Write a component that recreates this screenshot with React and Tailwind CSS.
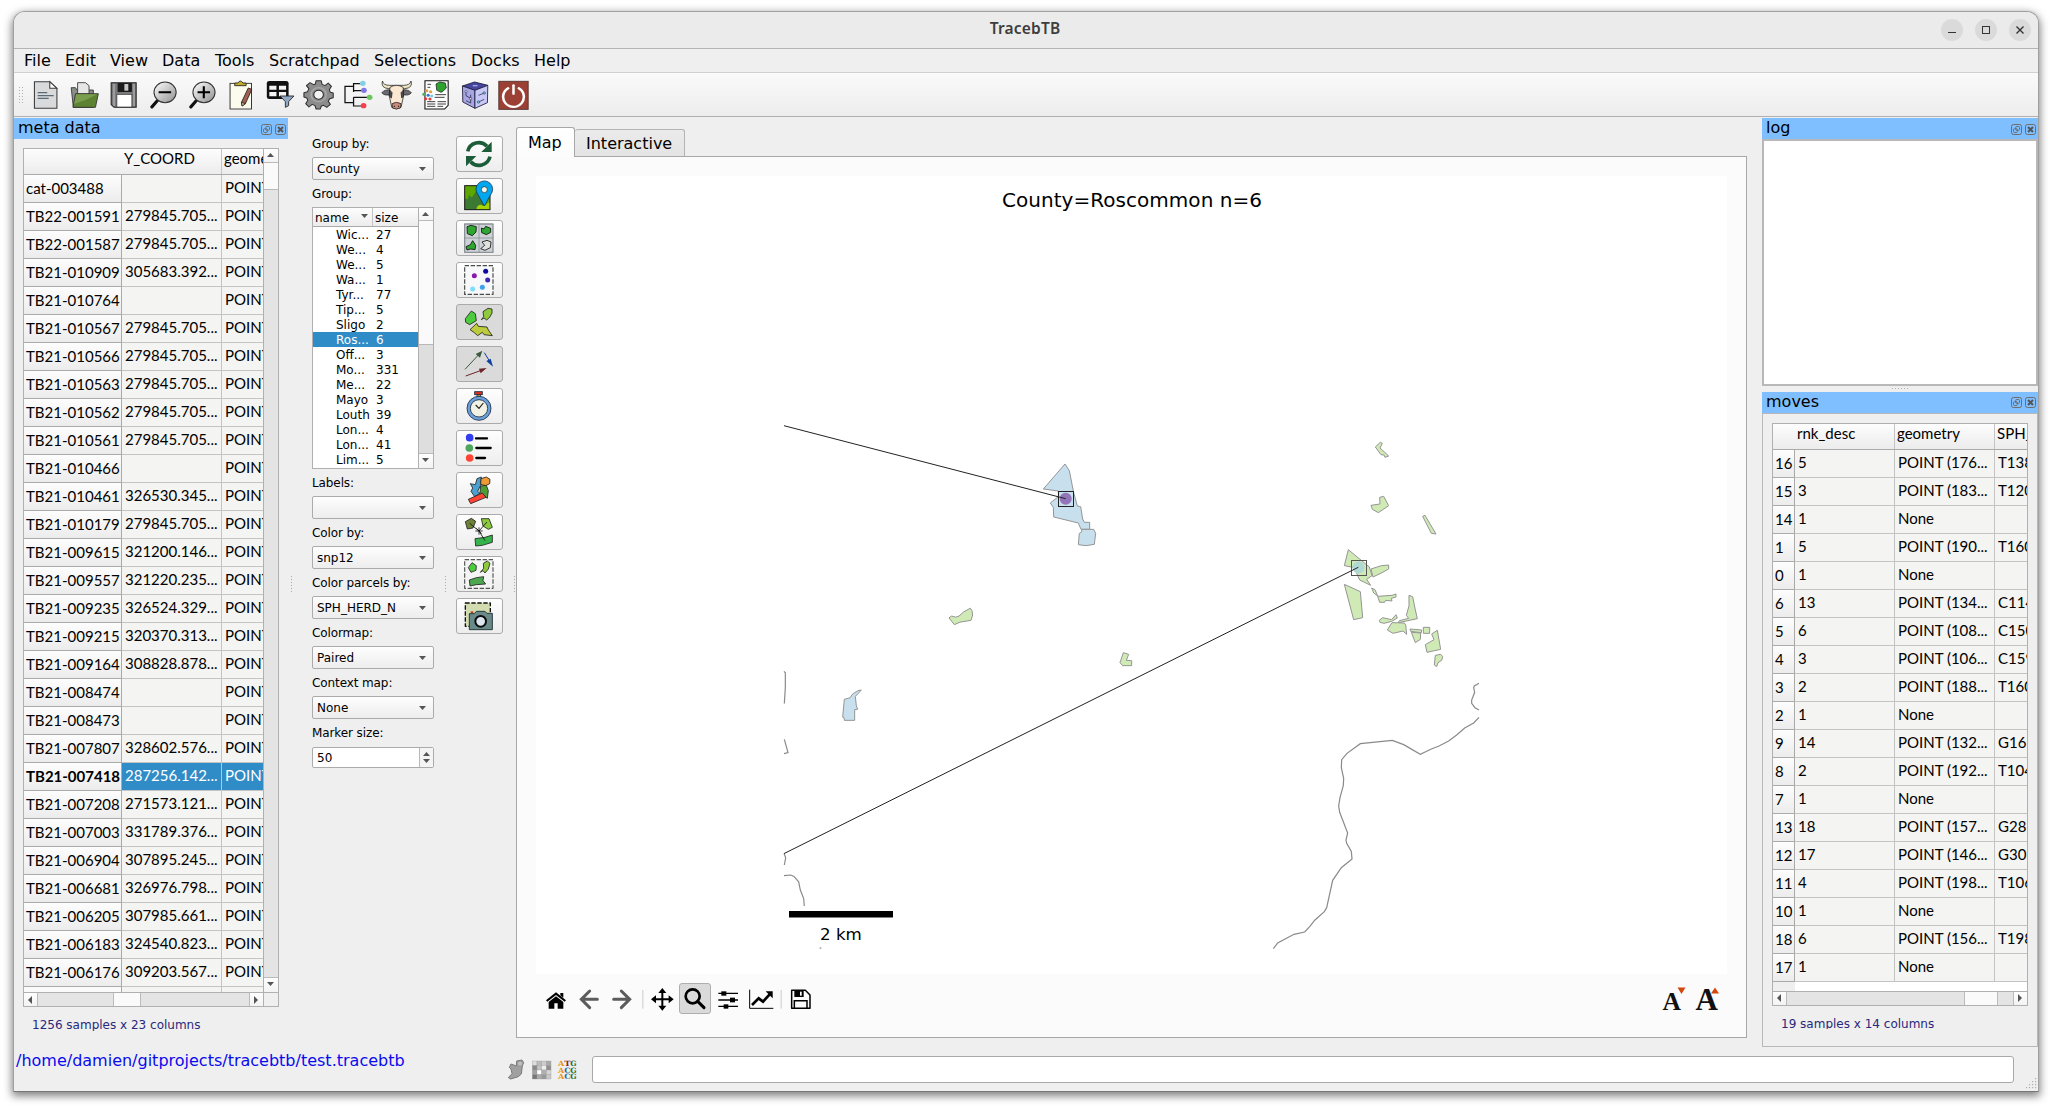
import React from "react";

const UI = "font-['DejaVu_Sans',sans-serif]";

/* ---------- shared bits ---------- */

function Tri({ dir = "down", className = "" }) {
  const pts = {
    down: "0,0 7,0 3.5,4",
    up: "0,4 7,4 3.5,0",
    left: "4,0 4,8 0,4",
    right: "0,0 0,8 4,4",
  }[dir];
  const vertical = dir === "down" || dir === "up";
  return (
    <svg
      className={className}
      width={vertical ? 7 : 4}
      height={vertical ? 4 : 8}
      viewBox={vertical ? "0 0 7 4" : "0 0 4 8"}
    >
      <polygon points={pts} fill="#555" />
    </svg>
  );
}

function DockTitle({ text }) {
  return (
    <div className="flex h-[21px] shrink-0 items-center bg-[#7fbfff] pr-[2px] pl-[4px]">
      <span className="flex-1 text-[16px] leading-[20px] -mt-[1px]">{text}</span>
      <svg className="mt-[1px]" width="25" height="11" viewBox="0 0 25 11" fill="none" stroke="#6d6d6d">
        <rect x=".5" y=".5" width="10" height="10" rx="2" />
        <rect x="4.7" y="2.5" width="3.8" height="3.8" rx="1" />
        <rect x="2.5" y="4.7" width="3.8" height="3.8" rx="1" />
        <rect x="14.5" y=".5" width="10" height="10" rx="2" />
        <path d="M17 3l5 5M22 3l-5 5" strokeWidth="2" stroke="#555" />
      </svg>
    </div>
  );
}

const BTN = "flex items-center justify-center bg-gradient-to-b from-[#fefefe] to-[#f3f3f3]";

function DotsV({ className }) {
  return (
    <svg className={className} width="1" height="17" viewBox="0 0 1 17">
      <path d="M.5 0V17" stroke="#a8a8a8" strokeDasharray="1 2" />
    </svg>
  );
}

/* ---------- toolbar icons ---------- */

const glass = (
  <>
    <defs>
      <linearGradient id="lens" x1="0" y1="0" x2="1" y2="1">
        <stop offset="0" stopColor="#fff" />
        <stop offset="1" stopColor="#8f8f8f" />
      </linearGradient>
    </defs>
  </>
);

const toolbarIcons = [
  /* new document */
  <g key="doc" stroke="#3c3c3c" strokeWidth="3">
    <path d="M97 245H140L160 265V325H97Z" fill="#d9dadb" />
    <path d="M140 245V265H160Z" fill="#fff" />
    <path d="M106 278H133M106 287H151M106 295H137" stroke="#5a6a76" strokeWidth="3.5" />
  </g>,
  /* open folder */
  <g key="folder" stroke="#333" strokeWidth="2.5">
    <path d="M200 263H212L216 270H262V322H206Z" fill="#8b8f89" />
    <path d="M218 248H240L250 257V282H218Z" fill="#e6e6e6" />
    <path d="M212 281H276L268 322H205Z" fill="#5c8232" />
    <path d="M214 283H273L240 300L208 312Z" fill="#90b060" stroke="none" opacity=".6" />
  </g>,
  /* floppy */
  <g key="save">
    <path d="M312 248H382V322H320L312 314Z" fill="#7a7a7e" stroke="#222" strokeWidth="3" />
    <rect x="330" y="249" width="40" height="27" fill="#1c1c1c" />
    <rect x="349" y="252" width="11" height="20" fill="#c8c8c8" />
    <rect x="328" y="283" width="42" height="38" fill="#fff" stroke="#333" strokeWidth="2" />
    <path d="M320 252V318M376 252V318" stroke="#bbb" strokeWidth="3" />
  </g>,
  /* zoom out */
  <g key="zo">
    {glass}
    <path d="M442 301L426 321" stroke="#111" strokeWidth="9" strokeLinecap="round" />
    <circle cx="463" cy="277" r="31" fill="url(#lens)" stroke="#333" strokeWidth="3" />
    <path d="M445 277H480" stroke="#000" strokeWidth="6" />
  </g>,
  /* zoom in */
  <g key="zi">
    <path d="M551 301L535 321" stroke="#111" strokeWidth="9" strokeLinecap="round" />
    <circle cx="572" cy="277" r="31" fill="url(#lens)" stroke="#333" strokeWidth="3" />
    <path d="M554 277H589M571.500 259V295" stroke="#000" strokeWidth="6" />
  </g>,
  /* clipboard */
  <g key="clip" stroke="#222" strokeWidth="2.500">
    <rect x="645" y="250" width="60" height="77" fill="#fbfbee" />
    <path d="M658 257V249H667Q674 237 681 249H690V257Z" fill="#bfae2c" />
    <path d="M696 264L706 268L688 311L679 318L677 307Z" fill="#a4604e" />
    <path d="M677 307L679 318L688 311Z" fill="#eed9a8" />
  </g>,
  /* table with filter */
  <g key="filter">
    <rect x="748" y="243" width="61" height="54" rx="7" fill="#111" />
    <path d="M755 257H775V269H755ZM782 257H802V269H782ZM755 276H775V289H755ZM782 276H802V289H782Z" fill="#f4f4f4" />
    <path d="M785 288H824L809 305V317L800 322V305Z" fill="#8fa8c4" stroke="#222" strokeWidth="2.500" />
  </g>,
  /* gear */
  <g key="gear" stroke="#2e2e2e" strokeWidth="3" strokeLinejoin="round">
    <path
      d="M886 242H900L903 253L911 257L920 249L929 259L923 269L926 277L934 279V293L924 296L920 304L926 313L916 322L907 316L900 319L898 327H886L883 317L875 313L866 321L857 311L863 301L860 294L852 291V278L862 275L866 266L859 257L869 248L879 254L884 252Z"
      fill="#8c8c8c"
    />
    <circle cx="893" cy="284" r="21" fill="none" stroke="#a9a9a9" strokeWidth="4" />
    <circle cx="893" cy="284" r="13.500" fill="#f2f2f2" />
  </g>,
  /* tree */
  <g key="tree">
    <path d="M1012 251H991V276M1012 272H991M967 310V259H991M967 308H991M991 292V318H1014M991 292H1034" fill="none" stroke="#111" strokeWidth="3.500" />
    <circle cx="1017" cy="250" r="8" fill="#84cfe4" />
    <circle cx="1020" cy="271" r="8" fill="#7d78e6" />
    <circle cx="1036" cy="292" r="8" fill="#6cc65a" />
    <circle cx="1019" cy="317" r="8" fill="#f8404c" />
  </g>,
  /* cow */
  <g key="cow" stroke="#222" strokeWidth="2.200" strokeLinejoin="round">
    <path d="M1072 243Q1074 256 1092 256H1131Q1149 256 1152 243Q1158 264 1134 266H1090Q1066 264 1072 243Z" fill="#efe6c4" />
    <path d="M1070 278Q1080 267 1096 270L1093 284Q1077 288 1070 278ZM1153 278Q1143 267 1127 270L1130 284Q1146 288 1153 278Z" fill="#6a6a70" />
    <path d="M1093 262Q1111 250 1130 262L1131 288L1124 322Q1111 331 1098 322L1091 288Z" fill="#fbe8d2" />
    <path d="M1092 270L1099 278L1097 294L1091 288ZM1131 270L1124 278L1126 294L1131 288Z" fill="#4c4c50" />
    <path d="M1099 311Q1111 303 1124 311L1122 324Q1111 330 1100 324Z" fill="#c88a7a" />
    <path d="M1105 317V321M1117 317V321" strokeWidth="3" />
  </g>,
  /* report */
  <g key="report">
    <path d="M1191 242H1256V316L1246 327H1191Z" fill="#fff" stroke="#111" strokeWidth="3" />
    <path d="M1222 252L1232 246L1248 249L1251 264L1240 275L1236 277L1224 271Z" fill="#2ea22e" stroke="#111" strokeWidth="2" />
    <path d="M1198 253H1208M1198 262H1206M1220 284H1250M1218 292H1246M1197 305H1220M1226 305H1250M1197 312H1220M1226 312H1250M1197 319H1220M1226 319H1242" stroke="#222" strokeWidth="2.500" />
    <circle cx="1196" cy="272" r="4.500" fill="#e8a03c" />
    <circle cx="1207" cy="275" r="4.500" fill="#e8a03c" />
    <circle cx="1188" cy="283" r="4.500" fill="#4cae60" />
    <circle cx="1200" cy="286" r="4.500" fill="#3a76d2" />
    <circle cx="1210" cy="288" r="4.500" fill="#78ccf0" />
    <circle cx="1193" cy="296" r="4.500" fill="#e04040" />
    <circle cx="1205" cy="297" r="4.500" fill="#e04040" />
  </g>,
  /* cube */
  <g key="cube" stroke="#1c1c3c" strokeWidth="2.500" strokeLinejoin="round">
    <path d="M1296 258L1330 246L1367 256L1331 271Z" fill="#4646a0" />
    <path d="M1296 258L1331 271V325L1297 306Z" fill="#a6a6e2" />
    <path d="M1367 256L1331 271V325L1366 308Z" fill="#c8c8f6" />
    <path d="M1306 276V287L1319 295M1306 302L1319 309V284M1341 286L1357 279M1341 306L1357 298" fill="none" strokeWidth="2" />
    <path d="M1325 257H1338" stroke="#c8c8f6" strokeWidth="3" />
    <g strokeWidth="1.500">
      <circle cx="1306" cy="275" r="3" fill="#fff" />
      <circle cx="1319" cy="296" r="3" fill="#fff" />
      <circle cx="1357" cy="279" r="3.500" fill="#78d4e8" />
      <circle cx="1341" cy="306" r="3.500" fill="#78d4e8" />
    </g>
  </g>,
  /* power */
  <g key="power">
    <rect x="1398" y="244" width="82" height="84" fill="#9c4036" stroke="#5a3a36" strokeWidth="3" />
    <path d="M1424 265A29 30 0 1 0 1454 265" fill="none" stroke="#fff" strokeWidth="7" strokeLinecap="round" />
    <path d="M1439 256V281" stroke="#fff" strokeWidth="7" strokeLinecap="round" />
  </g>,
];

function ToolIcon({ index, children }) {
  return (
    <svg width="39" height="33" viewBox={`${73.4 + 109.25 * index} 234 109.25 99`} preserveAspectRatio="none" className="shrink-0">
      {children}
    </svg>
  );
}

/* ---------- side button icons ---------- */

const sideIcons = [
  {
    y: 49,
    art: (
      <g fill="none" stroke="#1c5c38" strokeWidth="11">
        <path d="M504 94A34 34 0 0 1 562 79" />
        <polygon points="576,65 576,96 545,96" fill="#1c5c38" stroke="none" />
        <path d="M571 110A34 34 0 0 1 513 125" />
        <polygon points="499,139 499,108 530,108" fill="#1c5c38" stroke="none" />
      </g>
    ),
  },
  {
    y: 175,
    art: (
      <g>
        <rect x="495" y="197" width="76" height="72" fill="#5ea600" />
        <path d="M496 234Q506 246 508 222Q514 238 520 228Q524 220 530 214Q540 240 556 250L550 269H496Z" fill="#3c7a34" />
        <path d="M530 268Q532 254 544 254Q556 262 564 250L571 246V269Z" fill="#a6d400" />
        <rect x="495" y="197" width="76" height="72" fill="none" stroke="#1a1a1a" strokeWidth="3" />
        <path d="M554 258L535 224A25 25 0 1 1 573 224Z" fill="#00a6ee" stroke="#124" strokeWidth="2" />
        <circle cx="554" cy="209" r="9" fill="#f0fbf0" stroke="#222" strokeWidth="2" />
      </g>
    ),
  },
  {
    y: 301,
    art: (
      <g stroke="#111" strokeWidth="2.5" strokeLinejoin="round">
        <rect x="495" y="312" width="85" height="85" fill="#ccd2d6" stroke="#8c9296" strokeWidth="4" />
        <path d="M538 312V397M495 354H580" stroke="#8c9296" />
        <path d="M502 320L514 316L530 320L529 336L518 347L503 341Z" fill="#2fa62f" />
        <path d="M545 324L553 327L558 319L573 325V337L560 344L546 338Z" fill="#2fa62f" />
        <path d="M499 380L512 374L519 362L528 376L526 389L513 387L502 390Z" fill="#2fa62f" />
        <path d="M547 366L562 361L574 366L572 383L556 391L543 386L555 376Z" fill="#dfe2dc" />
      </g>
    ),
  },
  {
    y: 427,
    art: (
      <g>
        <rect x="495" y="437" width="85" height="86" fill="#f7f8f9" stroke="#4a4a4a" strokeWidth="3.500" strokeDasharray="13 5" />
        <circle cx="524" cy="467" r="7.500" fill="#8a18a8" />
        <circle cx="558" cy="454" r="7.500" fill="#0a0aa0" />
        <circle cx="564" cy="480" r="7.500" fill="#3e28b0" />
        <circle cx="548" cy="502" r="7.500" fill="#3ca2ee" />
        <circle cx="519" cy="507" r="7.500" fill="#7edcfc" />
      </g>
    ),
  },
  {
    y: 553,
    on: true,
    art: (
      <g stroke="#222" strokeWidth="2.500" strokeLinejoin="round">
        <path d="M497 596L515 573L527 581L530 602L510 614L498 607Z" fill="#4ccc3c" />
        <path d="M545 599L552 590L550 575L565 565L577 567V579L570 592L561 600L553 594Z" fill="#90ca3c" />
        <path d="M511 629L531 610L536 619L562 621L566 630L578 647L553 644L548 637L534 647L524 638L517 633Z" fill="#bccc3c" />
      </g>
    ),
  },
  {
    y: 679,
    on: true,
    art: (
      <g strokeWidth="3">
        <path d="M496 748L540 701" stroke="#3a5a3e" />
        <polygon points="548,692 541,713 528,702" fill="#3a5a3e" />
        <path d="M498 768L545 751" stroke="#6a262a" />
        <polygon points="561,744 543,760 538,746" fill="#6a262a" />
        <path d="M554 698L570 724" stroke="#1040a0" />
        <polygon points="580,740 560,723 573,716" fill="#1040a0" />
      </g>
    ),
  },
  {
    y: 805,
    art: (
      <g stroke="#1c2c44" strokeWidth="2.500">
        <rect x="532" y="823" width="11" height="9" fill="#e8962c" />
        <rect x="525" y="815" width="23" height="9" fill="#d8301c" />
        <circle cx="538" cy="865" r="36" fill="#6ca0d8" />
        <circle cx="538" cy="865" r="26" fill="#f2f2e4" />
        <path d="M528 855L538 865L551 849" fill="none" stroke="#222" strokeWidth="3.500" />
      </g>
    ),
  },
  {
    y: 931,
    art: (
      <g>
        <circle cx="510" cy="953" r="11.500" fill="#323ef0" />
        <circle cx="509" cy="984" r="11.500" fill="#4ea65e" />
        <circle cx="510" cy="1014" r="11.500" fill="#ff4636" />
        <path d="M529 955H562M530 984H573M530 1014H556" stroke="#000" strokeWidth="7" strokeLinecap="round" />
      </g>
    ),
  },
  {
    y: 1057,
    art: (
      <g transform="translate(0 990)" stroke="#222" strokeWidth="2.500" strokeLinejoin="round">
        <path d="M512 101L527 104L532 86L545 81L543 106L534 124L541 130L525 140L514 124L519 114Z" fill="#4ca0d0" />
        <path d="M544 86L560 81L571 88L570 101L558 107L543 103Z" fill="#f09a34" />
        <path d="M543 108L560 106L566 122L563 145L550 136L541 128Z" fill="#4e9c34" />
        <path d="M506 148L548 129L559 142L513 161Z" fill="#ff4434" />
      </g>
    ),
  },
  {
    y: 1183,
    art: (
      <g transform="translate(0 990)" stroke="#222" strokeWidth="2.500" strokeLinejoin="round">
        <path d="M497 215L515 205L528 214L520 234L503 237Z" fill="#6e8238" />
        <path d="M545 206H568L578 232L566 238L550 228Z" fill="#8cca3c" />
        <path d="M526 266L556 262L578 255V277L548 286L528 288Z" fill="#34b44a" />
        <path d="M510 220L538 243L562 216M538 243L556 272M538 232V254M527 243H549M530 235L546 251" fill="none" stroke="#111" />
      </g>
    ),
  },
  {
    y: 1309,
    art: (
      <g transform="translate(0 990)" stroke="#222" strokeWidth="2.500" strokeLinejoin="round">
        <rect x="495" y="329" width="85" height="86" fill="#f4f4f4" stroke="#555" strokeWidth="3.500" strokeDasharray="13 5" />
        <path d="M506 353L517 338L530 347L529 361L514 367Z" fill="#4ccc3c" />
        <path d="M542 367L552 355L551 340L563 333L571 340L566 357L556 369L550 362Z" fill="#90ca3c" />
        <path d="M509 390L530 383L552 380L550 392L558 402L530 404L511 408Z" fill="#4ea650" />
      </g>
    ),
  },
  {
    y: 1435,
    art: (
      <g transform="translate(0 990)" strokeLinejoin="round">
        <rect x="497" y="459" width="75" height="70" fill="#d2dcb0" stroke="#111" strokeWidth="4" strokeDasharray="13 5" />
        <rect x="513" y="484" width="8" height="6" fill="#c04020" />
        <path d="M509 491H524L530 484H556L562 490H578V539H509Z" fill="#6a8a8a" stroke="#2a3a3a" strokeWidth="3" />
        <circle cx="543" cy="514" r="16" fill="#dde6ee" stroke="#0c0c0c" strokeWidth="6" />
      </g>
    ),
  },
];

function SideButton({ icon }) {
  return (
    <div
      className={
        icon.on
          ? "h-[36px] w-[47px] rounded-[3px] border border-[#aaa] bg-[#dadada]"
          : "h-[36px] w-[47px] rounded-[3px] border border-[#ababab] bg-gradient-to-b from-[#fefefe] to-[#ededed]"
      }
    >
      <svg width="45" height="34" viewBox={`472 ${icon.y + 2} 135 102`} fill="none">
        {icon.art}
      </svg>
    </div>
  );
}

/* ---------- metadata table ---------- */

const metaRows = [
  ["cat-003488", ""],
  ["TB22-001591", "279845.705..."],
  ["TB22-001587", "279845.705..."],
  ["TB21-010909", "305683.392..."],
  ["TB21-010764", ""],
  ["TB21-010567", "279845.705..."],
  ["TB21-010566", "279845.705..."],
  ["TB21-010563", "279845.705..."],
  ["TB21-010562", "279845.705..."],
  ["TB21-010561", "279845.705..."],
  ["TB21-010466", ""],
  ["TB21-010461", "326530.345..."],
  ["TB21-010179", "279845.705..."],
  ["TB21-009615", "321200.146..."],
  ["TB21-009557", "321220.235..."],
  ["TB21-009235", "326524.329..."],
  ["TB21-009215", "320370.313..."],
  ["TB21-009164", "308828.878..."],
  ["TB21-008474", ""],
  ["TB21-008473", ""],
  ["TB21-007807", "328602.576..."],
  ["TB21-007418", "287256.142..."],
  ["TB21-007208", "271573.121..."],
  ["TB21-007003", "331789.376..."],
  ["TB21-006904", "307895.245..."],
  ["TB21-006681", "326976.798..."],
  ["TB21-006205", "307985.661..."],
  ["TB21-006183", "324540.823..."],
  ["TB21-006176", "309203.567..."],
];

const TBL = "font-['Lato',sans-serif] text-[15px] whitespace-nowrap";
const ROWHEAD = "border-r border-b border-[#aaa] bg-gradient-to-b from-[#fdfdfd] to-[#ececec]";
const CELL = "border-r border-b border-[#c4c4c4]";

function MetaTable() {
  return (
    <div className="ml-[9px] mt-[9px] flex h-[859px] w-[256px] flex-col border border-[#b0b0b0] bg-white">
      <div className="flex h-[843px]">
        <div className={"w-[239px] overflow-hidden " + TBL}>
          <div className="flex h-[26px] border-b border-[#aaa] bg-gradient-to-b from-[#fdfdfd] to-[#ececec] leading-[19px]">
            <div className="w-[198px] shrink-0 border-r border-[#c4c4c4] pl-[100px]">Y_COORD</div>
            <div className="pl-[2px]">geometry</div>
          </div>
          {metaRows.map(([id, y]) => {
            const sel = id === "TB21-007418";
            return (
              <div key={id} className="flex h-[28px]">
                <div className={"w-[98px] shrink-0 overflow-hidden pl-[2px] leading-[26px] " + ROWHEAD + (sel ? " font-bold" : "")}>{id}</div>
                <div className={"w-[100px] shrink-0 pl-[3px] leading-[24px] " + CELL + (sel ? " bg-[#308cc6] text-white" : " bg-[#f4f4f2]")}>{y}</div>
                <div className={"w-[80px] shrink-0 pl-[3px] leading-[24px] " + CELL + (sel ? " bg-[#308cc6] text-white" : " bg-[#f4f4f2]")}>POINT (</div>
              </div>
            );
          })}
          <div className="flex h-[5px]">
            <div className="w-[98px] shrink-0 border-r border-[#aaa] bg-[#fafafa]" />
            <div className="w-[100px] shrink-0 border-r border-[#c4c4c4] bg-[#f4f4f2]" />
            <div className="w-[60px] shrink-0 bg-[#f4f4f2]" />
          </div>
        </div>
        <div className="flex w-[15px] flex-col border-l border-[#b0b0b0] bg-[#e4e4e4]">
          <div className={"h-[14px] border-b border-[#bbb] pr-[2px] pb-[2px] " + BTN}><Tri dir="up" /></div>
          <div className="h-[27px] border-b border-[#b8b8b8] bg-[#fafafa]" />
          <div className="flex-1" />
          <div className={"h-[15px] border-t border-[#bbb] pr-[2px] pb-[2px] " + BTN}><Tri /></div>
        </div>
      </div>
      <div className="flex h-[14px] border-t border-[#b0b0b0] bg-[#e4e4e4]">
        <div className={"w-[14px] border-r border-[#bbb] pr-[1px] " + BTN}><Tri dir="left" /></div>
        <div className="w-[75px]" />
        <div className="w-[28px] border-x border-[#bbb] bg-[#fafafa]" />
        <div className="flex-1" />
        <div className={"w-[14px] border-l border-[#bbb] pr-[2px] " + BTN}><Tri dir="right" /></div>
        <div className="w-[15px] border-l border-[#b0b0b0] bg-[#efefef]" />
      </div>
    </div>
  );
}

/* ---------- moves table ---------- */

const moveRows = [
  ["16", "5", "POINT (176...", "T138"],
  ["15", "3", "POINT (183...", "T120"],
  ["14", "1", "None", ""],
  ["1", "5", "POINT (190...", "T160"],
  ["0", "1", "None", ""],
  ["6", "13", "POINT (134...", "C114"],
  ["5", "6", "POINT (108...", "C150"],
  ["4", "3", "POINT (106...", "C159"],
  ["3", "2", "POINT (188...", "T160"],
  ["2", "1", "None", ""],
  ["9", "14", "POINT (132...", "G161"],
  ["8", "2", "POINT (192...", "T104"],
  ["7", "1", "None", ""],
  ["13", "18", "POINT (157...", "G281"],
  ["12", "17", "POINT (146...", "G301"],
  ["11", "4", "POINT (198...", "T106"],
  ["10", "1", "None", ""],
  ["18", "6", "POINT (156...", "T198"],
  ["17", "1", "None", ""],
];

function MovesTable() {
  return (
    <div className="ml-[9px] mt-[9px] flex h-[583px] w-[256px] flex-col border border-[#b0b0b0] bg-white">
      <div className={"flex-1 overflow-hidden " + TBL}>
        <div className="flex h-[26px] border-b border-[#aaa] bg-gradient-to-b from-[#fdfdfd] to-[#ececec] leading-[19px]">
          <div className="w-[122px] shrink-0 border-r border-[#c4c4c4] pl-[24px]">rnk_desc</div>
          <div className="w-[100px] shrink-0 border-r border-[#c4c4c4] pl-[2px]">geometry</div>
          <div className="pl-[2px]">SPH_HERD</div>
        </div>
        {moveRows.map(([id, d, g, h]) => (
          <div key={id} className="flex h-[28px]">
            <div className={"w-[22px] shrink-0 pl-[2px] leading-[26px] " + ROWHEAD}>{id}</div>
            <div className={"w-[100px] shrink-0 bg-[#f4f4f2] pl-[3px] leading-[24px] " + CELL}>{d}</div>
            <div className={"w-[100px] shrink-0 bg-[#f4f4f2] pl-[3px] leading-[24px] " + CELL}>{g}</div>
            <div className={"w-[60px] shrink-0 bg-[#f4f4f2] pl-[3px] leading-[24px] " + CELL}>{h}</div>
          </div>
        ))}
        <div className="h-[12px] w-[22px] bg-[#efefef]" />
      </div>
      <div className="flex h-[14px] shrink-0 border-t border-[#b0b0b0] bg-[#e4e4e4]">
        <div className={"w-[14px] border-r border-[#bbb] pr-[1px] " + BTN}><Tri dir="left" /></div>
        <div className="w-[177px]" />
        <div className="w-[34px] border-x border-[#bbb] bg-[#fafafa]" />
        <div className="flex-1" />
        <div className={"w-[14px] border-l border-[#bbb] pr-[2px] " + BTN}><Tri dir="right" /></div>
      </div>
    </div>
  );
}

/* ---------- grouping controls ---------- */

function Label({ children }) {
  return <div className="h-[16px] leading-[16px] tracking-[-0.1px] whitespace-nowrap">{children}</div>;
}

function Combo({ value }) {
  return (
    <div className="flex h-[23px] w-[122px] items-center rounded-[2px] border border-[#ababab] bg-gradient-to-b from-[#fefefe] to-[#ededed] pr-[7px] pl-[4px]">
      <span className="flex-1">{value}</span>
      <Tri />
    </div>
  );
}

const groups = [
  ["Wic...", 27], ["We...", 4], ["We...", 5], ["Wa...", 1], ["Tyr...", 77], ["Tip...", 5], ["Sligo", 2], ["Ros...", 6],
  ["Off...", 3], ["Mo...", 331], ["Me...", 22], ["Mayo", 3], ["Louth", 39], ["Lon...", 4], ["Lon...", 41], ["Lim...", 5],
];

function GroupTree() {
  return (
    <div className="flex h-[262px] w-[122px] border border-[#b0b0b0] bg-white">
      <div className="w-[105px]">
        <div className="flex h-[19px] border-b border-[#aaa] bg-gradient-to-b from-[#fdfdfd] to-[#ececec] leading-[20px]">
          <div className="flex w-[60px] justify-between border-r border-[#c4c4c4] pr-[4px] pl-[2px]">
            name
            <Tri className="mt-[6px]" />
          </div>
          <div className="pl-[2px]">size</div>
        </div>
        {groups.map(([n, s], i) => (
          <div key={i} className={n === "Ros..." ? "flex h-[15px] bg-[#308cc6] leading-[17px] text-white" : "flex h-[15px] leading-[17px]"}>
            <div className="w-[63px] pl-[23px]">{n}</div>
            <div>{s}</div>
          </div>
        ))}
      </div>
      <div className="flex w-[15px] flex-col border-l border-[#b0b0b0] bg-[#dedede]">
        <div className={"h-[13px] border-b border-[#bbb] pr-[1px] " + BTN}><Tri dir="up" /></div>
        <div className="h-[124px] border-b border-[#b8b8b8] bg-[#fafafa]" />
        <div className="flex-1" />
        <div className={"h-[15px] border-t border-[#bbb] pr-[1px] pb-[2px] " + BTN}><Tri /></div>
      </div>
    </div>
  );
}

function Controls() {
  return (
    <div className="w-[122px] pt-[18px] text-[12px]">
      <div className="flex flex-col">
        <div className="h-[22px]"><div className="pt-[1px]"><Label>Group by:</Label></div></div>
        <Combo value="County" />
        <div className="pt-[6px] pb-[5px]"><Label>Group:</Label></div>
        <GroupTree />
      </div>
      {[["Labels:", ""], ["Color by:", "snp12"], ["Color parcels by:", "SPH_HERD_N"], ["Colormap:", "Paired"], ["Context map:", "None"]].map(([l, v]) => (
        <div key={l} className="h-[50px] pt-[6px]">
          <div className="pb-[5px]"><Label>{l}</Label></div>
          <Combo value={v} />
        </div>
      ))}
      <div className="pt-[6px]">
        <Label>Marker size:</Label>
        <div className="mt-[6px] flex h-[21px] rounded-[2px] border border-[#ababab] bg-white">
          <span className="flex-1 pl-[4px] leading-[20px]">50</span>
          <div className="flex w-[14px] flex-col items-center justify-center gap-[3px] border-l border-[#b8b8b8] bg-[#f4f4f4]">
            <Tri dir="up" />
            <Tri />
          </div>
        </div>
      </div>
    </div>
  );
}

/* ---------- map ---------- */

function MapPlot() {
  const ne = { vectorEffect: "non-scaling-stroke" };
  const green = ["1126,21 1141,7 1147,10 1140,24 1166,48 1155,52 1152,45 1143,44",
    "1139,172 1151,169 1166,197 1135,218 1117,208 1113,196 1140,192",
    "1268,229 1275,226 1308,282 1294,280",
    "1045,329 1108,381 1116,407 1100,418 1112,436 1079,420 1070,400 1075,385 1033,377",
    "1113,387 1144,377 1166,375 1166,387 1146,398 1119,411",
    "1033,433 1081,455 1088,533 1061,539",
    "1115,444 1125,449 1133,468 1121,459",
    "1133,469 1176,466 1188,462 1188,471 1174,475 1176,483 1157,481 1154,487 1139,487",
    "1227,466 1238,470 1246,510 1252,536 1195,548 1198,542 1226,535 1219,526 1227,498",
    "1138,541 1148,533 1175,539 1188,524 1192,534 1175,544 1152,550 1140,547",
    "1176,548 1213,549 1217,555 1220,583 1209,573 1179,580 1162,570",
    "1230,567 1265,570 1264,578 1232,574",
    "1234,577 1262,579 1261,598 1246,608",
    "1270,562 1289,562 1289,580 1270,580",
    "1295,582 1312,571 1322,628 1281,637 1276,614 1302,599",
    "1306,646 1322,643 1328,650 1325,661 1314,668 1310,680 1303,675",
    "370,638 386,643 379,661 395,662 395,677 368,677 360,668"];
  return (
    <svg width="1191" height="798" viewBox="536 176 1191 798" className="block bg-white" fill="none" strokeWidth="1">
      <g transform="translate(1000 440) scale(.333333)" stroke="#959595">
        <g fill="#c8dfed">
          <path style={ne} d="M195 72L208 92L221 158L232 198L242 200L248 237L253 247H269V268H243L235 249L161 231L160 202L151 189L175 170V153L130 147Z" />
          <path style={ne} d="M245 268H281L287 280L283 313L258 317L235 314L238 280L245 276Z" />
        </g>
        <g fill="#d0eab6">
          {green.map((p) => <polygon key={p} points={p} style={ne} />)}
        </g>
      </g>
      <g transform="translate(770 400) scale(.333333 .357143)" stroke="#959595">
        <path style={ne} fill="#d0eab6" d="M537 610L545 605L557 608L567 605L580 594L601 583L606 590L608 602L603 617L570 622L553 629Z" />
        <path style={ne} fill="#c8dfed" d="M223 838L240 834L248 823L264 814L274 812L256 830L259 856L263 866L254 867V897H223L222 889L218 888Z" />
        <path style={ne} d="M42 760L46 764V805L43 850M43 950L54 987L42 990M42 1270L47 1282L43 1302M42 1332L62 1330L72 1334L86 1349L91 1372L101 1396L103 1417M149 1535H154" stroke="#8a8a8a" strokeWidth="1.200" />
      </g>
      <g transform="translate(1240 660) scale(.333333)" stroke="#8a8a8a">
        <path style={ne} strokeWidth="1.200" d="M717 70L703 78L701 83L704 97L695 120V130L705 143L717 150M717 172L701 189L674 204L650 225L626 243L597 258L574 267L541 283L491 254L457 241L361 251L321 280L305 299L304 323L311 355L310 376L300 413L296 438L299 457L323 519L318 540L320 550L334 574L336 597L304 623L278 661L260 743L253 755L225 780L209 800L194 816L162 823L113 849L100 866" />
      </g>
      <circle cx="1065.700" cy="498.700" r="6" fill="#9274b8" />
      <circle cx="1358.500" cy="567.500" r="6" fill="#b0d8d4" />
      <g stroke="#222" strokeWidth="1">
        <rect x="1058.500" y="491.500" width="15" height="15" />
        <rect x="1351.500" y="560.500" width="15" height="15" stroke="#555" />
        <path d="M784 425.700L1065.700 498.700M784 853.600L1358.300 567.300" />
      </g>
      <rect x="789" y="911" width="104" height="6.500" fill="#000" />
      <text x="820" y="940" fontSize="16.700" fill="#000" className={UI}>2 km</text>
      <text x="1002" y="207" fontSize="20" textLength="260" fill="#000" className={UI}>County=Roscommon n=6</text>
    </svg>
  );
}

function Nav({ x, w, children }) {
  return (
    <svg width={w / 3} height="32" viewBox={`${x} 70 ${w} 96`} className="shrink-0">
      {children}
    </svg>
  );
}

function NavBar() {
  return (
    <div className="flex h-[63px] items-start pt-[9px]">
      <div className="ml-[4px] flex">
        <Nav x={120} w={100}>
          <path d="M138 122L168 98L198 122L194 126L168 106L142 126ZM181 100H190V114L181 107ZM146 127L168 110L190 127V147H173V131H163V147H146Z" fill="#000" />
        </Nav>
        <Nav x={220} w={97}>
          <path d="M293 119H247M270 94L245 119L270 144" fill="none" stroke="#5c5c5c" strokeWidth="9" strokeLinecap="round" />
        </Nav>
        <Nav x={317} w={99}>
          <path d="M340 119H386M363 94L388 119L363 144" fill="none" stroke="#5c5c5c" strokeWidth="9" strokeLinecap="round" />
        </Nav>
        <Nav x={416} w={24}>
          <path d="M427.500 91V147" stroke="#ccc" strokeWidth="3" />
        </Nav>
        <Nav x={440} w={97}>
          <path d="M486 92V146M459 119H513" stroke="#000" strokeWidth="6" />
          <path d="M486 85L498 100H474ZM486 153L498 138H474ZM452 119L467 107V131ZM520 119L505 107V131Z" fill="#000" />
        </Nav>
      </div>
      <div className="h-[31px] w-[32px] rounded-[3px] border border-[#aeaeae] bg-[#dadada]">
        <svg width="30" height="30" viewBox="540 75 90 90">
          <circle cx="578" cy="112" r="21" fill="none" stroke="#000" strokeWidth="8" />
          <path d="M593 127L612 146" stroke="#000" strokeWidth="9" strokeLinecap="round" />
        </svg>
      </div>
      <Nav x={633} w={101}>
        <path d="M655 101H714M655 121H714M655 140H714" stroke="#000" strokeWidth="4" />
        <rect x="664" y="95" width="15" height="13" fill="#000" />
        <rect x="690" y="114" width="15" height="14" fill="#000" />
        <rect x="671" y="134" width="14" height="13" fill="#000" />
      </Nav>
      <Nav x={734} w={98}>
        <path d="M748 90V146H819" fill="none" stroke="#000" strokeWidth="3" />
        <path d="M755 136L775 116L788 126L808 104" fill="none" stroke="#000" strokeWidth="8" />
        <path d="M796 95H817V116Z" fill="#000" />
      </Nav>
      <Nav x={832} w={24}>
        <path d="M844.500 91V147" stroke="#ccc" strokeWidth="3" />
      </Nav>
      <Nav x={856} w={96}>
        <path d="M876 92H917L931 106V146H876Z" fill="none" stroke="#000" strokeWidth="4.500" strokeLinejoin="round" />
        <path d="M884 146V123H922V146" fill="none" stroke="#000" strokeWidth="4.500" />
        <path d="M884 92H912V112H884Z" fill="#000" />
        <rect x="901" y="96" width="5" height="12" fill="#fff" />
      </Nav>
      <div className="flex-1" />
      <svg width="64" height="36" viewBox="1658 980 64 36" className="mr-[24px] -mt-[3px] shrink-0 overflow-visible">
        <g className="font-['Liberation_Serif',serif]" fontWeight="bold" fill="#111">
          <text x="1662.500" y="1009.500" fontSize="25.500">A</text>
          <text x="1695.500" y="1009.500" fontSize="31">A</text>
        </g>
        <path d="M1677.500 987.500H1685.500L1681.500 994ZM1711 993.500H1719L1715 987.500Z" fill="#d4480c" />
      </svg>
    </div>
  );
}

function MapPanel() {
  return (
    <div className="flex h-[921px] w-[1231px] flex-col pt-[10px]">
      <div className="relative z-10 flex h-[30px] items-end">
        <div className="h-[30px] w-[59px] rounded-t-[3px] border border-b-0 border-[#a8a8a8] bg-gradient-to-b from-white to-[#fcfcfc] pl-[11px] text-[16px] leading-[30px]">Map</div>
        <div className="mb-[1px] h-[27px] w-[110px] rounded-t-[3px] border border-b-0 border-l-0 border-[#b4b4b4] bg-gradient-to-b from-[#ebebeb] to-[#e4e4e4] pl-[11px] text-[16px] leading-[27px]">Interactive</div>
      </div>
      <div className="-mt-[1px] flex h-[882px] flex-col border border-[#a8a8a8] bg-[#fbfbfb] pt-[19px] pl-[19px]">
        <MapPlot />
        <NavBar />
      </div>
    </div>
  );
}

/* ---------- status bar ---------- */

const greys = ["#ddd", "#bbb", "#ccc", "#aaa", "#8a8a8a", "#c4c4c4", "#eee", "#8f8f8f", "#a2a2a2", "#fff", "#b0b0b0", "#d4d4d4", "#777", "#aaa", "#999", "#c8c8c8"];

function StatusBar() {
  return (
    <div className="flex h-[44px] items-start">
      <div className="w-[493px] pt-[3px] pl-[2px] text-[16px] leading-[21px] text-[#0a0aee]">/home/damien/gitprojects/tracebtb/test.tracebtb</div>
      <svg width="72" height="22" viewBox="21 297 216 66" className="mt-[12px] shrink-0">
        <path d="M28 322L33 312L49 318L50 303L66 300L71 308L67 318L64 342L55 350L32 357L25 353L36 341L33 327Z" fill="#a0a0a0" stroke="#7a7a7a" strokeWidth="3" />
        <circle cx="60" cy="311" r="8" fill="#bdbdbd" stroke="#8a8a8a" strokeWidth="2" />
        {greys.map((c, i) => (
          <rect key={i} x={97 + (i % 4) * 14} y={303 + Math.floor(i / 4) * 13.5} width="14" height="13.5" fill={c} stroke="#999" />
        ))}
        <g className="font-['DejaVu_Serif',serif]" fontWeight="bold" fontSize="22">
          {["ATG", "ACG", "ACG"].map((row, r) =>
            row.split("").map((ch, c) => (
              <text key={`${r}${c}`} x={174 + c * 18.5} y={318 + r * 19.5} textLength="19" lengthAdjust="spacingAndGlyphs" fill={{ A: "#e8961a", T: "#8a2424", C: "#1e6a9a", G: "#2a6e2a" }[ch]}>
                {ch}
              </text>
            ))
          )}
        </g>
      </svg>
      <div className="mt-[9px] ml-[13px] h-[27px] w-[1422px] rounded-[3px] border border-[#a8a8a8] bg-white" />
      <svg width="12" height="11" viewBox="0 0 12 11" className="mt-[31px] ml-[12px]" fill="#b0b0b0">
        {[[9, 0], [6, 3], [9, 3], [3, 6], [6, 6], [9, 6], [0, 9], [3, 9], [6, 9], [9, 9]].map(([x, y]) => (
          <rect key={`${x}-${y}`} x={x} y={y} width="1.200" height="1.200" />
        ))}
      </svg>
    </div>
  );
}

function WindowButton({ children }) {
  return (
    <div className="flex h-[22px] w-[22px] items-center justify-center rounded-full bg-[#dadada]">
      <svg width="10" height="10" viewBox="0 0 10 10" fill="none" stroke="#333">{children}</svg>
    </div>
  );
}

export default function App() {
  return (
    <div className={"h-[1108px] w-[2052px] overflow-hidden bg-white pt-[11px] pl-[13px] text-black " + UI}>
      <div className="flex h-[1081px] w-[2026px] flex-col overflow-hidden rounded-t-[12px] border border-[#a0a0a0] border-b-[#777] bg-[#efefef] shadow-[0_3px_9px_1px_rgba(0,0,0,0.5)]">
        <div className="flex h-[37px] shrink-0 items-center border-b border-[#b4b4b4] bg-[#ebebeb]">
          <div className="w-[158px]" />
          <div className="-mt-[2px] flex-1 text-center font-['Noto_Sans',sans-serif] text-[15.500px] font-semibold tracking-[0.200px] text-[#3d3d3d]">TracebTB</div>
          <div className="flex w-[160px] justify-end gap-[12px] pr-[7px]">
            <WindowButton><path d="M1 7.500H9" /></WindowButton>
            <WindowButton><rect x="1.500" y="1.500" width="7" height="7" /></WindowButton>
            <WindowButton><path d="M1.500 1.500L8.500 8.500M8.500 1.500L1.500 8.500" strokeWidth="1.400" /></WindowButton>
          </div>
        </div>
        <div className="flex h-[24px] shrink-0 border-b border-[#d0d0d0] pl-[10px] text-[16px] leading-[23px]">
          <div className="w-[41px]">File</div>
          <div className="w-[45px]">Edit</div>
          <div className="w-[52px]">View</div>
          <div className="w-[53px]">Data</div>
          <div className="w-[54px]">Tools</div>
          <div className="w-[105px]">Scratchpad</div>
          <div className="w-[97px]">Selections</div>
          <div className="w-[63px]">Docks</div>
          <div>Help</div>
        </div>
        <div className="flex h-[44px] shrink-0 items-start border-b border-[#b0b0b0] bg-gradient-to-b from-[#fafafa] to-[#ededed] pt-[5px]">
          <svg width="12" height="33" viewBox="0 0 12 33" className="shrink-0">
            <path d="M5.500 9V26M8.500 9V26" stroke="#b0b0b0" strokeDasharray="1 2" />
          </svg>
          {toolbarIcons.map((icon, i) => (
            <ToolIcon key={i} index={i}>{icon}</ToolIcon>
          ))}
        </div>
        <div className="flex h-[930px] shrink-0">
          <div className="w-[274px] pt-[1px]">
            <DockTitle text="meta data" />
            <MetaTable />
            <div className="mt-[8px] h-[16px] overflow-hidden pl-[18px] text-[12px] leading-[20px] text-[#28287c]">1256 samples x 23 columns</div>
          </div>
          <DotsV className="ml-[3px] mt-[459px] mr-[20px]" />
          <Controls />
          <DotsV className="ml-[11px] mt-[459px] mr-[10px]" />
          <div className="flex flex-col gap-[6px] pt-[19px]">
            {sideIcons.map((icon, i) => <SideButton key={i} icon={icon} />)}
          </div>
          <DotsV className="ml-[11px] mt-[459px] mr-[1px]" />
          <MapPanel />
          <div className="ml-[15px] flex w-[276px] flex-col pt-[1px]">
            <DockTitle text="log" />
            <div className="h-[247px] shrink-0 border-2 border-[#b8b8b8] bg-white" />
            <div className="flex h-[6px] items-center justify-center">
              <svg width="17" height="1" viewBox="0 0 17 1"><path d="M0 .5H17" stroke="#b0b0b0" strokeDasharray="1 2" /></svg>
            </div>
            <DockTitle text="moves" />
            <div className="h-[635px] border border-[#b8b8b8]">
              <MovesTable />
              <div className="mt-[8px] h-[15px] overflow-hidden pl-[18px] text-[12px] leading-[20px] text-[#28287c]">19 samples x 14 columns</div>
            </div>
          </div>
        </div>
        <StatusBar />
      </div>
    </div>
  );
}
